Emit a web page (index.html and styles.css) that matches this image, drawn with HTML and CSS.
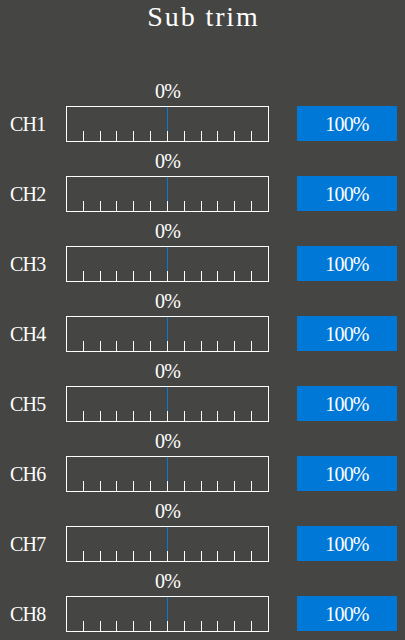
FILE: index.html
```html
<!DOCTYPE html>
<html lang="en">
<head>
  <meta charset="UTF-8">
  <meta name="viewport" content="width=device-width, initial-scale=1.0">
  <title>Sub trim</title>
  <link rel="stylesheet" href="styles.css">
</head>
<body>
  <header class="title">Sub trim</header>
  <div class="channels">
    <div class="row"><div class="pct">0%</div><div class="name">CH1</div><div class="scale"><i></i><i></i><i></i><i></i><i></i><i></i><i></i><i></i><i></i><i></i><i></i><span class="mark"></span></div><div class="btn">100%</div></div>
    <div class="row"><div class="pct">0%</div><div class="name">CH2</div><div class="scale"><i></i><i></i><i></i><i></i><i></i><i></i><i></i><i></i><i></i><i></i><i></i><span class="mark"></span></div><div class="btn">100%</div></div>
    <div class="row"><div class="pct">0%</div><div class="name">CH3</div><div class="scale"><i></i><i></i><i></i><i></i><i></i><i></i><i></i><i></i><i></i><i></i><i></i><span class="mark"></span></div><div class="btn">100%</div></div>
    <div class="row"><div class="pct">0%</div><div class="name">CH4</div><div class="scale"><i></i><i></i><i></i><i></i><i></i><i></i><i></i><i></i><i></i><i></i><i></i><span class="mark"></span></div><div class="btn">100%</div></div>
    <div class="row"><div class="pct">0%</div><div class="name">CH5</div><div class="scale"><i></i><i></i><i></i><i></i><i></i><i></i><i></i><i></i><i></i><i></i><i></i><span class="mark"></span></div><div class="btn">100%</div></div>
    <div class="row"><div class="pct">0%</div><div class="name">CH6</div><div class="scale"><i></i><i></i><i></i><i></i><i></i><i></i><i></i><i></i><i></i><i></i><i></i><span class="mark"></span></div><div class="btn">100%</div></div>
    <div class="row"><div class="pct">0%</div><div class="name">CH7</div><div class="scale"><i></i><i></i><i></i><i></i><i></i><i></i><i></i><i></i><i></i><i></i><i></i><span class="mark"></span></div><div class="btn">100%</div></div>
    <div class="row"><div class="pct">0%</div><div class="name">CH8</div><div class="scale"><i></i><i></i><i></i><i></i><i></i><i></i><i></i><i></i><i></i><i></i><i></i><span class="mark"></span></div><div class="btn">100%</div></div>
  </div>
</body>
</html>
```
FILE: styles.css
```css
body { margin: 0; background: #454643; color: #fff; font-family: 'Liberation Serif', serif; width: 405px; height: 640px; overflow: hidden; }
.title { height: 80px; text-align: center; font-size: 28px; letter-spacing: 1.9px; line-height: 34px; padding-left: 2px; box-sizing: border-box; }
.channels { display: flex; flex-direction: column; gap: 8px; }
.row { display: grid; grid-template-columns: 66px 203px 28px 100px; grid-template-rows: 26px 36px; font-size: 20px; letter-spacing: -0.8px; }
.pct { grid-column: 2; text-align: center; line-height: 22px; }
.name { grid-column: 1; grid-row: 2; padding-left: 10px; line-height: 37px; }
.scale { grid-column: 2; grid-row: 2; border: 1px solid #fff; position: relative; display: flex; align-items: flex-end; justify-content: space-evenly; }
.scale i { display: block; width: 1px; height: 10px; background: #fff; }
.scale .mark { position: absolute; left: 100px; top: 0; width: 1px; height: 24px; background: #0a78d0; }
.btn { grid-row: 2; grid-column: 4; height: 35px; background: #0078d7; text-align: center; line-height: 36px; }
```
